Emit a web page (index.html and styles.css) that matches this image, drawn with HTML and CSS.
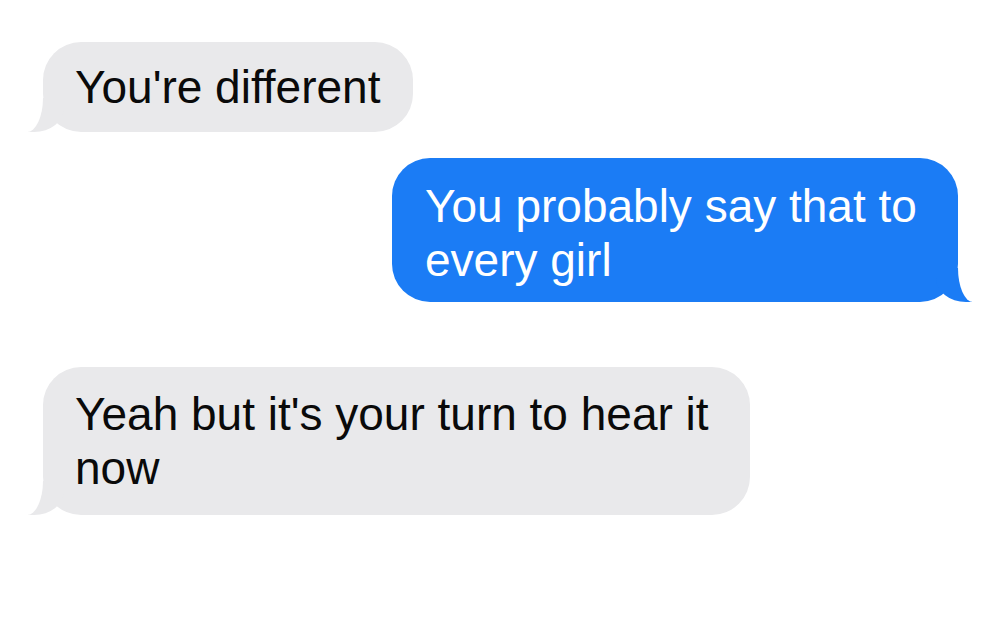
FILE: index.html
```html
<!DOCTYPE html>
<html lang="en">

<head>
    <meta charset="UTF-8">
    <meta name="viewport" content="width=device-width, initial-scale=1.0">
    <title>Messages</title>
    <link rel="stylesheet" href="styles.css">
</head>

<body>
    <div class="thread">
        <div class="bubble received">You're different</div>
        <div class="bubble sent">You probably say that to every girl</div>
        <div class="bubble received last">Yeah but it's your turn to hear it now</div>
    </div>
</body>

</html>
```

FILE: styles.css
```css
body {
    margin: 0;
    padding: 0;
    background-color: #fff;
    font-family: "Liberation Sans", Arial, sans-serif;
}

.thread {
    display: flex;
    flex-direction: column;
    padding: 42px 42px 0 43px;
}

.bubble {
    position: relative;
    width: fit-content;
    padding: 18px 33px 18px 32px;
    border-radius: 38px;
    font-size: 46px;
    line-height: 54px;
}

.received {
    align-self: flex-start;
    max-width: 642px;
    background-color: #e9e9eb;
    color: #0a0a0a;
}

.sent {
    align-self: flex-end;
    max-width: 500px;
    margin-top: 26px;
    padding: 21px 33px 15px 33px;
    background-color: #1b7cf5;
    color: #fff;
}

.received.last {
    margin-top: 65px;
    padding-top: 20px;
    padding-bottom: 20px;
}

/* tails */
.bubble::before,
.bubble::after {
    content: "";
    position: absolute;
    bottom: 0;
    height: 34px;
}

.received::before {
    left: -15px;
    width: 36px;
    background-color: #e9e9eb;
    border-bottom-right-radius: 30px 24px;
}

.received::after {
    left: -40px;
    width: 40px;
    background-color: #fff;
    border-bottom-right-radius: 16px 34px;
}

.sent::before {
    right: -14px;
    width: 36px;
    background-color: #1b7cf5;
    border-bottom-left-radius: 30px 24px;
}

.sent::after {
    right: -40px;
    width: 40px;
    background-color: #fff;
    border-bottom-left-radius: 15px 34px;
}
```
